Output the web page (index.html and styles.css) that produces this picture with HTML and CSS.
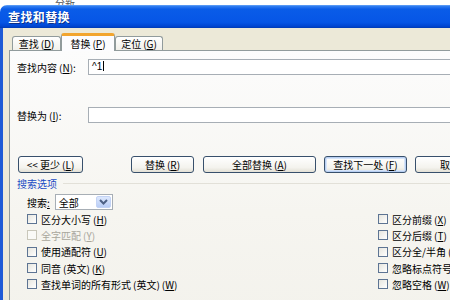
FILE: index.html
```html
<!DOCTYPE html>
<html lang="zh-CN">

<head>
    <meta charset="UTF-8">
    <title>查找和替换</title>
    <meta name="viewport" content="width=device-width, initial-scale=1.0">
    <link rel="stylesheet" href="styles.css">
</head>

<body>
    <!-- 上方被遮住的文档 -->
    <div class="doc_strip"><span>分新</span></div>

    <div class="window">
        <div class="title_bar">查找和替换</div>

        <div class="client">
            <!-- 标签页 -->
            <div class="tabs">
                <div class="tab tab_find">查找<span class="key">(<u>D</u>)</span></div>
                <div class="tab tab_active">替换<span class="key">(<u>P</u>)</span></div>
                <div class="tab tab_goto">定位<span class="key">(<u>G</u>)</span></div>
            </div>

            <div class="panel">
                <div class="field_row">
                    <label class="field_label" for="findText">查找内容<span class="key">(<u>N</u>)</span>:</label>
                    <div class="text_box" id="findText">^1<span class="caret"></span></div>
                </div>

                <div class="field_row row_replace">
                    <label class="field_label" for="replaceText">替换为<span class="key">(<u>I</u>)</span>:</label>
                    <div class="text_box" id="replaceText"></div>
                </div>

                <!-- 按钮列 -->
                <div class="button_row">
                    <button class="btn btn_less">&lt;&lt; 更少<span class="key">(<u>L</u>)</span></button>
                    <button class="btn btn_replace">替换<span class="key">(<u>R</u>)</span></button>
                    <button class="btn btn_all">全部替换<span class="key">(<u>A</u>)</span></button>
                    <button class="btn btn_next">查找下一处<span class="key">(<u>F</u>)</span></button>
                    <button class="btn btn_cancel">取消</button>
                </div>

                <div class="group_title"><span>搜索选项</span><div class="group_line"></div></div>

                <div class="search_row">
                    <span>搜索<u>:</u></span>
                    <div class="select_box">
                        <span class="select_value">全部</span>
                        <span class="select_arrow">
                            <svg width="9" height="6" viewBox="0 0 9 6">
                                <path d="M1 1 L4.5 4.5 L8 1" fill="none" stroke="#4d6185" stroke-width="2"/>
                            </svg>
                        </span>
                    </div>
                </div>

                <!-- 选项 -->
                <div class="options">
                    <div class="opt_col">
                        <div class="opt"><span class="check"></span>区分大小写<span class="key">(<u>H</u>)</span></div>
                        <div class="opt disabled"><span class="check"></span>全字匹配<span class="key">(<u>Y</u>)</span></div>
                        <div class="opt"><span class="check"></span>使用通配符<span class="key">(<u>U</u>)</span></div>
                        <div class="opt"><span class="check"></span>同音<span class="key">(英文)</span><span class="key">(<u>K</u>)</span></div>
                        <div class="opt"><span class="check"></span>查找单词的所有形式<span class="key">(英文)</span><span class="key">(<u>W</u>)</span></div>
                    </div>
                    <div class="opt_col opt_right">
                        <div class="opt"><span class="check"></span>区分前缀<span class="key">(<u>X</u>)</span></div>
                        <div class="opt"><span class="check"></span>区分后缀<span class="key">(<u>T</u>)</span></div>
                        <div class="opt"><span class="check"></span>区分全/半角<span class="key">(<u>M</u>)</span></div>
                        <div class="opt"><span class="check"></span>忽略标点符号<span class="key">(<u>S</u>)</span></div>
                        <div class="opt"><span class="check"></span>忽略空格<span class="key">(<u>W</u>)</span></div>
                    </div>
                </div>
            </div>
        </div>
    </div>
</body>

</html>
```

FILE: styles.css
```css
body {
    margin: 0;
    width: 450px;
    height: 300px;
    overflow: hidden;
    background-color: white;
    font-family: "Noto Sans CJK SC", "Liberation Sans", sans-serif;
    font-size: 10px;
    color: black;
}

u {
    text-decoration: underline;
    text-underline-offset: 1px;
}

.key {
    margin-left: 2px;
}

.doc_strip {
    height: 5px;
    overflow: hidden;
    padding-left: 55px;
    color: #555;
    font-size: 10px;
    line-height: 6px;
}

.window {
    width: 470px;
}

.title_bar {
    height: 23px;
    line-height: 23px;
    padding-left: 8px;
    border-radius: 7px 7px 0 0;
    background: linear-gradient(#6aa6f6 0, #2f7cf0 6%, #0a5ce8 18%, #0656e6 75%, #0046d2 92%, #003bb4 100%);
    color: white;
    font-size: 12px;
    font-weight: bold;
    letter-spacing: 0.4px;
    text-shadow: 1px 1px 0 #0a2f8a;
}

.client {
    height: 290px;
    border-left: 3px solid #1e5ad6;
    background-color: #ece9d8;
    padding: 5px 0 0 6px;
}

.tabs {
    display: flex;
    align-items: flex-end;
    height: 17px;
    padding-left: 3px;
}

.tab {
    height: 14px;
    line-height: 13px;
    border: 1px solid #919b9c;
    border-bottom: none;
    border-radius: 3px 3px 0 0;
    background: linear-gradient(#ffffff, #f1f0ea);
    text-align: center;
    box-sizing: border-box;
}

.tab_find {
    width: 49px;
}

.tab_goto {
    width: 48px;
}

.tab_active {
    width: 54px;
    height: 18px;
    line-height: 16px;
    margin-bottom: -1px;
    border-top: 3px solid #f2a52e;
    background: #fcfcfe;
    position: relative;
    z-index: 1;
}

.panel {
    height: 260px;
    border: 1px solid #919b9c;
    border-right: none;
    background: linear-gradient(#fcfcfc, #f6f5f0 60%, #f3f2ec);
    padding: 8px 0 0 7px;
}

.field_row {
    display: flex;
    align-items: center;
    height: 16px;
}

.row_replace {
    margin-top: 32px;
}

.field_label {
    width: 71px;
    flex-shrink: 0;
}

.text_box {
    flex: 1;
    height: 16px;
    box-sizing: border-box;
    border: 1px solid #a7aeb5;
    background-color: white;
    padding-left: 3px;
    line-height: 14px;
    font-family: "Liberation Sans", sans-serif;
    font-size: 10px;
}

.caret {
    display: inline-block;
    width: 1px;
    height: 10px;
    margin-left: 1px;
    vertical-align: -1px;
    background-color: black;
}

.button_row {
    display: flex;
    margin-top: 33px;
    margin-left: 1px;
}

.btn {
    height: 17px;
    padding: 0;
    border: 1px solid #38506c;
    border-radius: 3px;
    background: linear-gradient(#ffffff, #f4f3ee 70%, #e3e0d5);
    font-family: inherit;
    font-size: 10px;
    line-height: 14px;
    color: black;
    flex-shrink: 0;
}

.btn_less {
    width: 65px;
}

.btn_replace {
    width: 63px;
    margin-left: 48px;
}

.btn_all {
    width: 113px;
    margin-left: 9px;
}

.btn_next {
    width: 83px;
    margin-left: 8px;
    box-shadow: inset 0 0 0 1px #b8cff2, inset 0 0 0 2px #d6e4f8;
}

.btn_cancel {
    width: 70px;
    margin-left: 8px;
}

.group_title {
    display: flex;
    align-items: center;
    margin-top: 3px;
    height: 14px;
    color: #1a4bc4;
}

.group_line {
    flex: 1;
    height: 1px;
    margin-left: 6px;
    background-color: #e2e0d8;
}

.search_row {
    display: flex;
    align-items: center;
    margin-top: 4px;
    padding-left: 10px;
    height: 16px;
}

.select_box {
    display: flex;
    align-items: center;
    width: 58px;
    height: 16px;
    margin-left: 5px;
    box-sizing: border-box;
    border: 1px solid #a7aeb5;
    background-color: white;
}

.select_value {
    flex: 1;
    padding-left: 3px;
}

.select_arrow {
    display: flex;
    align-items: center;
    justify-content: center;
    width: 15px;
    height: 12px;
    margin-right: 1px;
    border-radius: 2px;
    background: linear-gradient(#dde8fd, #b9cdf6);
    border: 1px solid #c3d3f5;
    box-sizing: border-box;
}

.options {
    display: flex;
    margin-top: 1px;
    padding-left: 10px;
}

.opt_col {
    width: 351px;
    flex-shrink: 0;
}

.opt {
    display: flex;
    align-items: center;
    height: 16.3px;
    white-space: nowrap;
}

.check {
    width: 10px;
    height: 10px;
    margin-right: 4px;
    box-sizing: border-box;
    border: 1px solid #5d7493;
    background: linear-gradient(135deg, #e6e5de, #ffffff);
}

.disabled {
    color: #a8a69c;
}

.disabled .check {
    border-color: #c9c7ba;
    background: #fafaf7;
}
```
